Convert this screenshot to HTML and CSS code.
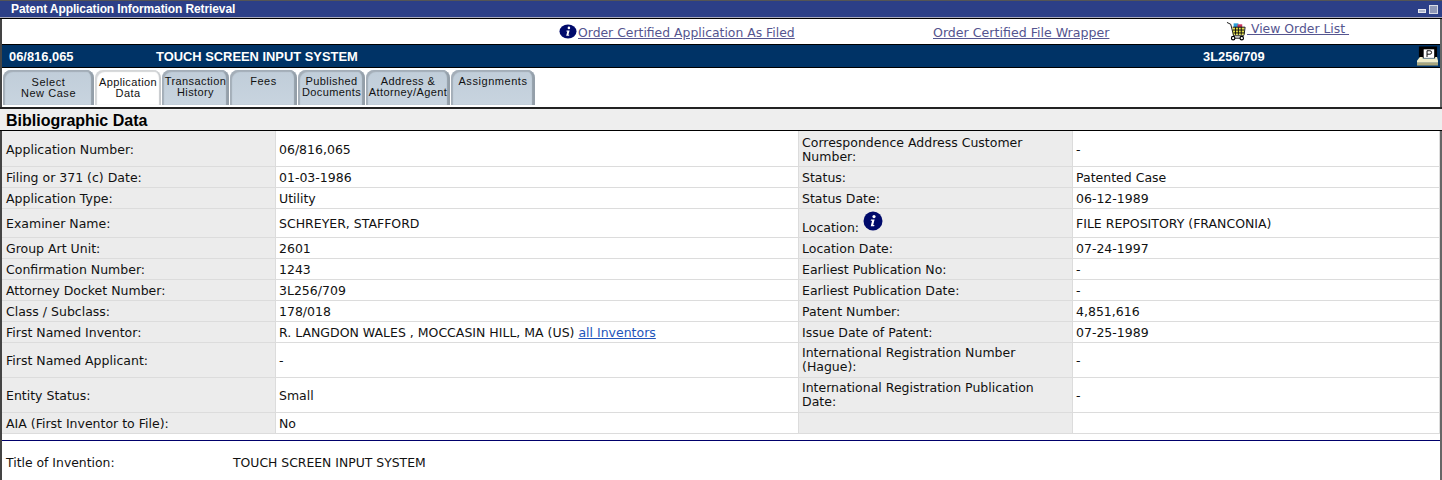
FILE: index.html
```html
<!DOCTYPE html>
<html lang="en">
<head>
<meta charset="utf-8">
<title>Patent Application Information Retrieval</title>
<link rel="stylesheet" href="styles.css">
</head>
<body>
<div class="page">
  <div class="titlebar">
    <span class="titlebar-text">Patent Application Information Retrieval</span>
    <span class="win-controls"><span class="win-min"></span><span class="win-max"></span></span>
  </div>
  <div class="order-row">
    <span class="order-a">
      <svg class="info-wide" viewBox="0 0 18 15" aria-hidden="true"><ellipse cx="9" cy="7.5" rx="8.5" ry="7" fill="#000a6b"/><circle cx="9.9" cy="3.9" r="1.3" fill="#fff"/><path d="M7.6 6.5h3l-1.2 4.3h1l-.3.9H7.2l1.1-4.3h-1z" fill="#fff"/></svg>
      <a class="order-link" href="#">Order Certified Application As Filed</a>
    </span>
    <a class="order-link order-b" href="#">Order Certified File Wrapper</a>
    <span class="order-c">
      <svg class="cart" viewBox="0 0 22 20" aria-hidden="true">
        <rect x="8" y="2" width="5" height="5" fill="#2a9fd8"/><rect x="12" y="3" width="5" height="5" fill="#c8345c"/>
        <rect x="7" y="6" width="12" height="8" fill="#e6e24a"/>
        <path d="M1 1l4 2 3 12h11M7 6h13l-1 8M10 6v8M13 6v8M16 6v8M7 9h12M8 12h11" fill="none" stroke="#111" stroke-width="1"/>
        <circle cx="7.5" cy="17.5" r="1.8" fill="#fff" stroke="#000" stroke-width="1.2"/><circle cx="16.5" cy="17.5" r="1.8" fill="#fff" stroke="#000" stroke-width="1.2"/><path d="M9 17.5h6" stroke="#000"/>
      </svg>
      <a class="order-link order-view" href="#">&nbsp;View Order List&nbsp;</a>
    </span>
  </div>
  <div class="casebar">
    <span class="case-num">06/816,065</span>
    <span class="case-title">TOUCH SCREEN INPUT SYSTEM</span>
    <span class="case-docket">3L256/709</span>
    <svg class="printer" viewBox="0 0 22 20" aria-hidden="true">
      <rect x="2" y="0" width="19" height="12" fill="#000"/>
      <rect x="7" y="3" width="11" height="9" fill="#fff"/>
      <path d="M10.5 11V4.5h3a1.8 1.8 0 0 1 0 3.6h-3" fill="none" stroke="#000" stroke-width="1"/>
      <path d="M3 11h3v1.5h13V11h2l1 4v2H0v-2z" fill="#f0ecc8"/><rect x="0" y="17" width="22" height="3" fill="#a9a67c"/>
    </svg>
  </div>
  <div class="tabs">
    <a class="tab tab-1 tab-low" href="#">Select<br>New Case</a>
    <a class="tab tab-2 tab-active" href="#">Application<br>Data</a>
    <a class="tab tab-3" href="#">Transaction<br>History</a>
    <a class="tab tab-4" href="#">Fees</a>
    <a class="tab tab-5" href="#">Published<br>Documents</a>
    <a class="tab tab-6" href="#">Address &amp;<br>Attorney/Agent</a>
    <a class="tab tab-7" href="#">Assignments</a>
  </div>
  <h2 class="section-head">Bibliographic Data</h2>
  <table class="data">
    <colgroup><col class="c1"><col class="c2"><col class="c3"><col class="c4"></colgroup>
    <tr class="h36"><th>Application Number:</th><td>06/816,065</td><th>Correspondence Address Customer Number:</th><td>-</td></tr>
    <tr class="h21"><th>Filing or 371 (c) Date:</th><td>01-03-1986</td><th>Status:</th><td>Patented Case</td></tr>
    <tr class="h21"><th>Application Type:</th><td>Utility</td><th>Status Date:</th><td>06-12-1989</td></tr>
    <tr class="h29"><th>Examiner Name:</th><td>SCHREYER, STAFFORD</td><th class="loc-cell">Location:
      <svg class="info-round" viewBox="0 0 20 20" aria-hidden="true"><circle cx="10" cy="10" r="9.5" fill="#000a6b"/><circle cx="11" cy="5.6" r="1.6" fill="#fff"/><path d="M8 8.5h3.6l-1.4 5.6h1.3l-.4 1.2H7.7l1.4-5.6H7.7z" fill="#fff"/></svg></th><td>FILE REPOSITORY (FRANCONIA)</td></tr>
    <tr class="h21"><th>Group Art Unit:</th><td>2601</td><th>Location Date:</th><td>07-24-1997</td></tr>
    <tr class="h21"><th>Confirmation Number:</th><td>1243</td><th>Earliest Publication No:</th><td>-</td></tr>
    <tr class="h21"><th>Attorney Docket Number:</th><td>3L256/709</td><th>Earliest Publication Date:</th><td>-</td></tr>
    <tr class="h21"><th>Class / Subclass:</th><td>178/018</td><th>Patent Number:</th><td>4,851,616</td></tr>
    <tr class="h21"><th>First Named Inventor:</th><td>R. LANGDON WALES , MOCCASIN HILL, MA (US) <a class="inv-link" href="#">all Inventors</a></td><th>Issue Date of Patent:</th><td>07-25-1989</td></tr>
    <tr class="h35"><th>First Named Applicant:</th><td>-</td><th>International Registration Number (Hague):</th><td>-</td></tr>
    <tr class="h35"><th>Entity Status:</th><td>Small</td><th>International Registration Publication Date:</th><td>-</td></tr>
    <tr class="h21"><th>AIA (First Inventor to File):</th><td>No</td><th></th><td></td></tr>
  </table>
  <div class="title-row"><span class="title-label">Title of Invention:</span><span>TOUCH SCREEN INPUT SYSTEM</span></div>
</div>
</body>
</html>
```
FILE: styles.css
```css
html, body { margin: 0; padding: 0; background: #fff; }
body { height: 480px; overflow: hidden; }
.page {
  height: 480px;
  box-sizing: border-box;
  border-left: 2px solid #444;
  border-right: 2px solid #666;
  font-family: "DejaVu Sans", Verdana, sans-serif;
  font-size: 12px;
  color: #111;
}
.titlebar {
  height: 16px;
  margin-left: -2px;
  margin-right: -2px;
  background: #2c3f87;
  border-top: 1px solid #555;
  border-bottom: 1px solid #aab;
  box-shadow: 0 1px 0 #000;
  display: flex;
  align-items: center;
  justify-content: space-between;
  color: #fff;
  font-family: "Liberation Sans", Arial, sans-serif;
  font-weight: bold;
  font-size: 12px;
  padding: 0 4px 0 11px;
}
.titlebar-text { letter-spacing: -0.1px; }
.win-controls { display: flex; align-items: center; gap: 3px; }
.win-min { width: 6px; height: 2px; background: #aeb6cc; border: 1px solid #e4e6ee; margin-top: 3px; }
.win-max { width: 7px; height: 7px; background: #8f98b8; border: 1px solid #d8dbe6; }
.order-row {
  height: 25px;
  margin-top: 1px;
  display: flex;
  align-items: center;
}
.order-a { display: flex; align-items: center; gap: 1px; margin-left: 557px; width: 374px; padding-top: 2px; }
.order-b { width: 294px; margin-top: 2px; }
.order-c { display: flex; align-items: flex-start; height: 22px; padding-top: 1px; }
.order-link { color: #55558f; text-decoration: underline; font-size: 12.4px; }
.order-b.order-link { font-size: 12.6px; }
.info-wide { width: 18px; height: 15px; margin-top: -2px; }
.cart { width: 21px; height: 20px; margin-left: -1px; }
.casebar {
  height: 22px;
  background: #003366;
  border-top: 1px solid #000;
  border-bottom: 1px solid #000;
  display: flex;
  align-items: center;
  color: #fff;
  font-family: "Liberation Sans", Arial, sans-serif;
  font-weight: bold;
  font-size: 12.9px;
}
.case-num { width: 147px; padding-left: 7px; box-sizing: border-box; }
.case-title { width: 1054px; box-sizing: border-box; padding-left: 7px; }
.case-docket { width: 214px; }
.printer { width: 21px; height: 20px; }
.tabs { display: flex; height: 37px; padding: 2px 0 0 1px; box-sizing: border-box; }
.tab {
  box-sizing: border-box;
  height: 35px;
  margin-right: 1px;
  padding-top: 6px;
  text-align: center;
  text-decoration: none;
  font-family: "Liberation Sans", Arial, sans-serif;
  font-size: 11px;
  letter-spacing: 0.55px;
  line-height: 11px;
  color: #111;
  background: linear-gradient(#c0cdd9, #c8d4df);
  border-radius: 8px 8px 0 0;
  box-shadow: inset 2px 2px 1px #a4aeb8, inset -3px 0 1px #949fa9;
  white-space: nowrap;
}
.tab-low { padding-top: 7px; }
.tab-active { background: #fff; box-shadow: inset 2px 2px 1px #d4d6d8, inset -2px 0 1px #c6c9cc; padding-top: 7px; }
.tab-1 { width: 91px; }
.tab-2 { width: 66px; letter-spacing: 0.4px; }
.tab-3 { width: 67px; letter-spacing: 0.4px; }
.tab-4 { width: 67px; }
.tab-5 { width: 67px; letter-spacing: 0.4px; }
.tab-6 { width: 84px; letter-spacing: 0.4px; }
.tab-7 { width: 84px; }
.section-head {
  margin: 2px -2px 0;
  height: 21px;
  background: #eeeeee;
  border-top: 2px solid #222;
  border-bottom: 1px solid #000;
  font-family: "Liberation Sans", Arial, sans-serif;
  font-size: 16px;
  font-weight: bold;
  line-height: 23px;
  padding-left: 6px;
  color: #000;
}
.data {
  width: 1438px;
  table-layout: fixed;
  border-collapse: separate;
  border-spacing: 0;
}
.c1 { width: 274px; }
.c2 { width: 523px; }
.c3 { width: 274px; }
.c4 { width: 367px; }
.data th, .data td {
  box-sizing: border-box;
  padding: 1px 3px 0 4px;
  border-bottom: 1px solid #dcdcdc;
  border-right: 1px solid #dcdcdc;
  font-size: 12.5px;
  font-weight: normal;
  text-align: left;
  line-height: 14px;
  vertical-align: middle;
}
.data th { background: #ececec; padding-right: 30px; }
.data td { background: #fff; padding-left: 3px; }
.data th:nth-child(3) { padding-left: 3px; }
.data .h36 th, .data .h36 td { padding-top: 3px; }
.data .h35 th:nth-child(3) { padding-top: 0; padding-bottom: 1px; }
.data .loc-cell { padding-top: 0; padding-bottom: 1px; white-space: nowrap; }
.h36 { height: 36px; }
.h21 { height: 21px; }
.h29 { height: 29px; }
.h35 { height: 35px; }
.inv-link { color: #2255bb; }
.info-round { width: 20px; height: 20px; vertical-align: 1px; }
.title-row {
  margin-top: 6px;
  border-top: 1px solid #00006b;
  padding: 14px 0 0 4px;
  display: flex;
  font-size: 12.4px;
  line-height: 15px;
}
.title-label { width: 227px; }
```
